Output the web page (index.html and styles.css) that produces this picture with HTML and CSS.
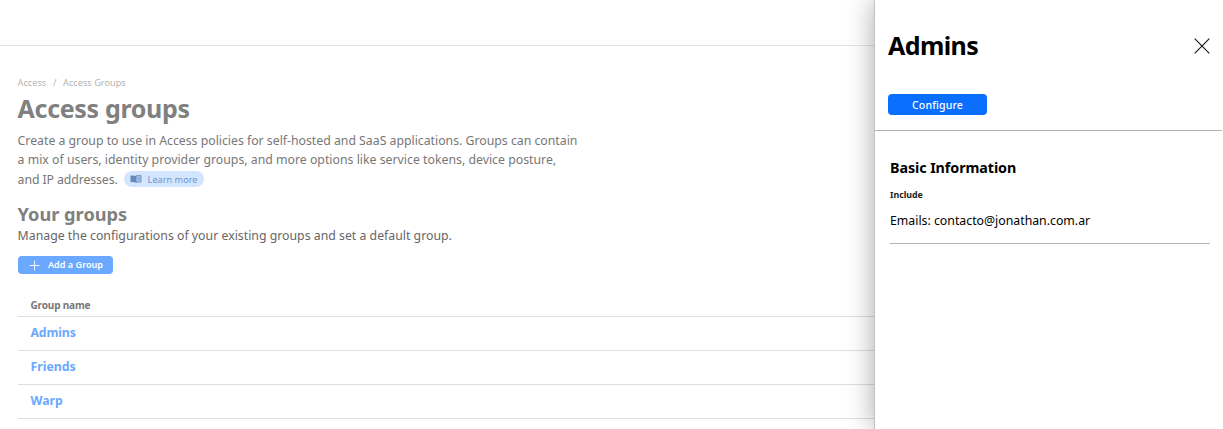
FILE: index.html
```
<!DOCTYPE html>
<html lang="en">
<head>
<meta charset="utf-8">
<title>Access groups</title>
<link rel="stylesheet" href="styles.css">
</head>
<body>
<div class="app">
  <div class="page">
    <header class="topbar"></header>
    <main class="content">
      <nav class="crumbs"><span class="crumb-root">Access</span><span class="crumb-sep">/</span><span class="crumb-leaf">Access Groups</span></nav>
      <h1 class="title"><span>Access groups</span></h1>
      <div class="intro">
        <div class="intro-a">Create a group to use in Access policies for self-hosted and SaaS applications. Groups can contain</div>
        <div class="intro-b">a mix of users, identity provider groups, and more options like service tokens, device posture,</div>
        <div class="intro-last"><span class="intro-c">and IP addresses.</span>
          <a class="learn"><svg class="book" viewBox="0 0 12 10"><path fill="#6588bb" d="M0.500 1.700Q3.500 1.200 6 1.900V8.500Q3.500 7.900 0.500 8.200Z"/><path fill="#b4ccee" stroke="#6588bb" stroke-width="0.900" d="M6 1.900Q8.500 1.200 11 1.700V8Q8.500 7.700 6 8.300Z"/><path stroke="#6588bb" stroke-width="0.700" d="M7.500 3.500l2.200-.3M7.500 4.900l2.200-.3M7.500 6.300l2.200-.3"/></svg><span class="learn-text">Learn more</span></a>
        </div>
      </div>
      <h2 class="subtitle"><span>Your groups</span></h2>
      <p class="hint"><span>Manage the configurations of your existing groups and set a default group.</span></p>
      <button class="add"><svg class="plus" viewBox="0 0 11 11"><path d="M5.500 0.500V10.500M0.500 5.500H10.500" stroke="#fff" stroke-width="0.900"/></svg><span class="add-text">Add a Group</span></button>
      <div class="table">
        <div class="table-head"><span>Group name</span></div>
        <div class="row"><a class="name-a">Admins</a></div>
        <div class="row"><a class="name-f">Friends</a></div>
        <div class="row"><a class="name-w">Warp</a></div>
      </div>
    </main>
  </div>
  <aside class="panel">
    <div class="panel-top">
      <div class="panel-heading">
        <h2 class="panel-title">Admins</h2>
        <svg class="close" viewBox="0 0 16 16"><path d="M0.700 0.700L15.300 15.300M15.300 0.700L0.700 15.300" stroke="#111" stroke-width="1.100"/></svg>
      </div>
      <button class="configure"><span>Configure</span></button>
    </div>
    <div class="panel-body">
      <h3 class="section">Basic Information</h3>
      <div class="rule-label">Include</div>
      <div class="rule-value">Emails: contacto@jonathan.com.ar</div>
    </div>
  </aside>
</div>
</body>
</html>
```
FILE: styles.css
```
* { box-sizing: border-box; }
body, h1, h2, h3, p { margin: 0; }
body { background: #fff; font-family: "Noto Sans", "Open Sans", sans-serif; overflow: hidden; }
button { border: 0; padding: 0; font-family: inherit; }
svg { display: block; fill: none; flex: none; }
.app { display: flex; width: 1223px; height: 429px; overflow: hidden; white-space: nowrap; }
.page { width: 874px; flex: none; }
.topbar { height: 46px; border-bottom: 1px solid #e3e3e3; }
.content { padding: 30px 0 0 17.600px; }
.crumbs { display: flex; height: 14px; line-height: 14px; font-size: 9.200px; color: #b4b4b4; }
.crumb-root { width: 35.500px; }
.crumb-sep { width: 10px; }
.title { height: 38px; line-height: 36px; font-size: 25px; letter-spacing: -0.320px; color: #808080; }
.intro { margin-top: 3px; font-size: 12.300px; line-height: 19px; color: #777; }
.intro-a { letter-spacing: -0.015px; }
.intro-last { display: flex; align-items: center; height: 20px; }
.intro-c { width: 106px; letter-spacing: -0.100px; }
.learn { display: flex; align-items: center; width: 80px; height: 16px; padding-left: 6px; border-radius: 8px; background: #d4e5ff; color: #7295c8; font-size: 9.200px; }
.book { width: 12px; height: 10px; margin-right: 6px; }
.subtitle { margin-top: 12px; height: 26px; line-height: 26px; font-size: 18.200px; color: #808080; }
.hint { height: 18px; line-height: 18px; font-size: 12.300px; color: #666; }
.add { display: flex; align-items: center; width: 95px; height: 18px; margin-top: 11px; margin-left: 0.400px; padding-left: 11px; border-radius: 4px; background: #6ba8ff; color: #fff; font-size: 9.100px; font-weight: 600; }
.add-text { line-height: 16px; padding-bottom: 1px; }
.plus { width: 11px; height: 11px; margin-right: 8px; }
.table { margin-left: 0.400px; }
.table-head { margin-top: 19px; height: 24px; padding-left: 12.500px; border-bottom: 1px solid #dedede; line-height: 24px; font-size: 10px; letter-spacing: -0.150px; font-weight: 700; color: #777; }
.row { height: 34px; padding-left: 12.500px; border-bottom: 1px solid #dedede; line-height: 31px; font-size: 12.300px; font-weight: 700; color: #6ba8ff; }
.name-a { letter-spacing: -0.150px; }
.panel { position: relative; width: 349px; flex: none; background: #fff; border-left: 1px solid #c2c2c2; box-shadow: 0 0 26px rgba(0, 0, 0, .34); color: #000; }
.panel-top { height: 131px; margin-right: 1px; padding: 26px 12px 0 13px; border-bottom: 1px solid #b3b3b3; }
.panel-heading { display: flex; justify-content: space-between; align-items: center; height: 40px; }
.panel-title { font-size: 25px; line-height: 38px; letter-spacing: -0.600px; height: 40px; }
.close { width: 16px; height: 16px; }
.configure { display: flex; align-items: center; justify-content: center; width: 99px; height: 21px; margin-top: 28px; border-radius: 4px; background: #0a6eff; color: #fff; font-size: 10.500px; font-weight: 500; letter-spacing: 0.150px; }
.panel-body { margin: 26px 13px 0 15px; height: 87px; border-bottom: 1px solid #b3b3b3; }
.section { height: 22px; line-height: 22px; font-size: 14.300px; letter-spacing: -0.080px; }
.rule-label { margin-top: 9px; height: 14px; line-height: 14px; font-size: 8.800px; font-weight: 700; color: #222; }
.rule-value { margin-top: 9px; height: 20px; line-height: 20px; font-size: 12.300px; }
```
